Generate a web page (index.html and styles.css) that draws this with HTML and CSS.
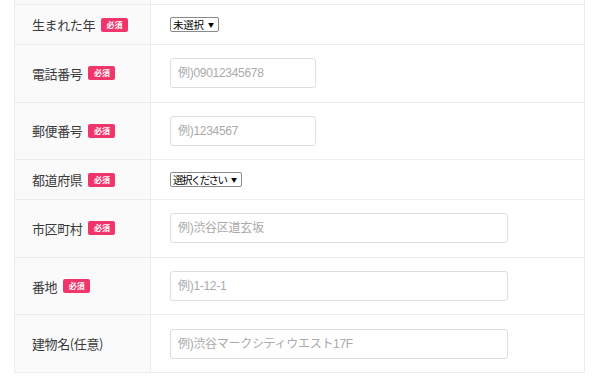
FILE: index.html
```html
<!DOCTYPE html>
<html lang="ja">
<head>
<meta charset="utf-8">
<title>フォーム</title>
<link rel="stylesheet" href="styles.css">
</head>
<body>
<div class="form">
  <div class="row row--prev"><div class="label"></div><div class="field"></div></div>

  <div class="row row--sel">
    <div class="label"><span class="name">生まれた年</span><span class="req">必須</span></div>
    <div class="field"><span class="sel-wrap sel-wrap--year"><select class="sel"><option>未選択</option></select></span></div>
  </div>

  <div class="row row--in">
    <div class="label"><span class="name">電話番号</span><span class="req">必須</span></div>
    <div class="field"><input class="inp inp--short" type="text" placeholder="例)09012345678"></div>
  </div>

  <div class="row row--in">
    <div class="label"><span class="name">郵便番号</span><span class="req">必須</span></div>
    <div class="field"><input class="inp inp--short" type="text" placeholder="例)1234567"></div>
  </div>

  <div class="row row--sel">
    <div class="label"><span class="name">都道府県</span><span class="req">必須</span></div>
    <div class="field"><span class="sel-wrap sel-wrap--pref"><select class="sel sel--tight"><option>選択ください</option></select></span></div>
  </div>

  <div class="row row--in">
    <div class="label"><span class="name">市区町村</span><span class="req">必須</span></div>
    <div class="field"><input class="inp" type="text" placeholder="例)渋谷区道玄坂"></div>
  </div>

  <div class="row row--in">
    <div class="label"><span class="name">番地</span><span class="req">必須</span></div>
    <div class="field"><input class="inp" type="text" placeholder="例)1-12-1"></div>
  </div>

  <div class="row row--in">
    <div class="label"><span class="name">建物名(任意)</span></div>
    <div class="field"><input class="inp" type="text" placeholder="例)渋谷マークシティウエスト17F"></div>
  </div>
</div>
</body>
</html>
```

FILE: styles.css
```css
* { box-sizing: border-box; }
html, body { margin: 0; padding: 0; background: #fff; }
body {
  width: 600px;
  height: 382px;
  overflow: hidden;
  font-family: "Noto Sans CJK JP", "Liberation Sans", sans-serif;
  color: #333;
}
.form {
  margin-left: 14px;
  width: 571px;
  border-left: 1px solid #ececec;
  border-right: 1px solid #ececec;
  border-bottom: 1px solid #ececec;
}
.row {
  display: flex;
  border-top: 1px solid #ececec;
}
.row--prev { border-top: none; height: 4px; }
.label {
  width: 136px;
  flex: none;
  background: #fafafa;
  border-right: 1px solid #ececec;
  padding-left: 17px;
  display: flex;
  align-items: center;
  gap: 6px;
}
.name {
  font-size: 13px;
  letter-spacing: -0.4px;
  line-height: 1;
  color: #3a3a3a;
}
.req {
  display: inline-block;
  width: 27px;
  height: 14px;
  line-height: 14px;
  text-align: center;
  background: #f0356b;
  color: #fff;
  font-size: 8px;
  font-weight: bold;
  border-radius: 2px;
}
.field {
  flex: 1;
  padding-left: 19px;
  display: flex;
  align-items: center;
}
.row--sel .field { padding-top: 12px; padding-bottom: 12px; }
.row--in .field { padding-top: 13.3px; padding-bottom: 13.3px; }

.inp {
  width: 338px;
  height: 30px;
  border: 1px solid #dedede;
  border-radius: 3px;
  padding: 0 7px;
  font-family: "Liberation Sans", "Noto Sans CJK JP", sans-serif;
  font-size: 12px;
  letter-spacing: -0.3px;
  color: #333;
  background: #fff;
  outline: none;
}
.inp--short { width: 146px; }
.inp::placeholder { color: #aaa; }

.sel-wrap {
  position: relative;
  display: inline-block;
  height: 15px;
}
.sel-wrap--year { width: 49px; }
.sel-wrap--pref { width: 72px; }
.sel {
  -webkit-appearance: none;
  appearance: none;
  display: block;
  width: 100%;
  height: 15px;
  margin: 0;
  padding: 0 0 0 2px;
  border: 1px solid #8a8a8a;
  border-radius: 2px;
  background: #fff;
  font-family: "Noto Sans CJK JP", sans-serif;
  font-size: 10.5px;
  letter-spacing: -0.3px;
  line-height: 13px;
  color: #000;
}
.sel--tight { letter-spacing: -1.6px; }
.sel-wrap::after {
  content: "▼";
  position: absolute;
  right: 5px;
  top: 4px;
  font-size: 6px;
  line-height: 7px;
  color: #000;
  pointer-events: none;
}
```
